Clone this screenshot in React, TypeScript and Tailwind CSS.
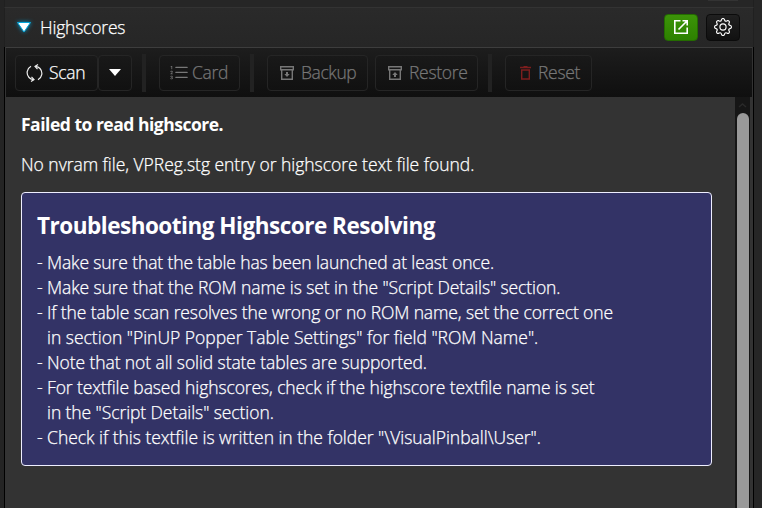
import type { ReactNode } from "react";
import { BsGear, BsListOl } from "react-icons/bs";

const shell = "flex h-[36px] items-center rounded-[4px] border border-[#252525] bg-linear-to-b from-[#191919] to-[#111111] whitespace-nowrap";

function ToolButton({ className, icon, children }: { className: string; icon: ReactNode; children: ReactNode }) {
  return (
    <button className={`${shell} ${className} text-[#777777]`}>
      {icon}
      {children}
    </button>
  );
}

function Separator({ className }: { className: string }) {
  return <div className={`h-[38px] w-[4px] shrink-0 bg-[#222222] ${className}`} />;
}

function SyncIcon() {
  return (
    <svg className="ml-[10px] mr-[6px] h-[18px] w-[17px] shrink-0" viewBox="0 0 17 18" fill="none" stroke="#eeeeee" strokeWidth="1.2">
      <path d="M5 2.200A7.300 7.300 0 0 0 3 13.500Q4.500 15.200 7.500 15.600M12 15.800A7.300 7.300 0 0 0 14 4.500Q12.500 2.800 9.500 2.400" />
      <path d="M5.500 12.800L8 15.600L5 17.500M11.500 5.200L9 2.400L12 .5" />
    </svg>
  );
}

function ArchiveIcon({ up }: { up?: boolean }) {
  return (
    <svg className="ml-[12px] mr-[7px] h-[14px] w-[14px] shrink-0" viewBox="0 0 14 14" fill="none" stroke="currentColor" strokeWidth="1.4">
      <path d="M.7 .7H13.300V3.700H.7ZM1.700 4V13.300H12.300V4" />
      <path d={up ? "M7 11V8" : "M7 6V9"} strokeWidth="2" />
      <path d={up ? "M4.300 9L7 6L9.700 9Z" : "M4.300 8L7 11L9.700 8Z"} fill="currentColor" stroke="none" />
    </svg>
  );
}

function TrashIcon() {
  return (
    <svg className="ml-[14px] mr-[7px] h-[14px] w-[11px] shrink-0" viewBox="0 0 11 14" fill="none" stroke="#7d1e1e" strokeWidth="1.4">
      <path d="M0 1.500H11M3.500 .7H7.500M1.700 4H9.300V13H1.700Z" />
    </svg>
  );
}

const tips = [
  { text: "- Make sure that the table has been launched at least once.", style: "tracking-[-0.12px]" },
  { text: '- Make sure that the ROM name is set in the "Script Details" section.', style: "tracking-[-0.09px]" },
  { text: "- If the table scan resolves the wrong or no ROM name, set the correct one", style: "tracking-[-0.117px]" },
  { text: 'in section "PinUP Popper Table Settings" for field "ROM Name".', style: "ml-[10px] tracking-[-0.01px]" },
  { text: "- Note that not all solid state tables are supported.", style: "tracking-[-0.09px]" },
  { text: "- For textfile based highscores, check if the highscore textfile name is set", style: "tracking-[-0.107px]" },
  { text: 'in the "Script Details" section.', style: "ml-[10px] tracking-[-0.08px]" },
  { text: '- Check if this textfile is written in the folder "\\VisualPinball\\User".', style: "tracking-[-0.03px]" },
];

export default function App() {
  return (
    <div className="flex h-[508px] w-[762px] overflow-hidden bg-[#262626] font-['Open_Sans','Noto_Sans',sans-serif] text-[17.5px] font-light text-white [-webkit-text-stroke:0.25px]">
      <div className="flex w-[4px] shrink-0 flex-col bg-[#242424]" />
      <div className="flex w-[750px] shrink-0 flex-col">
        <div className="h-[7px] shrink-0 border-x border-[#202020] bg-[#262626] pl-[703px]">
          <div className="h-px w-[30px] bg-[#333333]" />
        </div>
        <header className="flex h-[40px] shrink-0 items-center border-x border-t border-x-[#202020] border-t-[#333333] bg-linear-to-b from-[#2a2a2a] to-[#262626] pl-[10px] pb-px">
          <svg className="h-[20px] w-[20px] overflow-visible drop-shadow-[0_0_2px_#0096c9]" viewBox="0 0 20 20">
            <path d="M2.500 5.500H15.500L9 15Z" fill="#fff" stroke="#00a5da" strokeWidth="1" />
          </svg>
          <h1 className="ml-[5px] grow leading-[24px] tracking-[-0.2px]">Highscores</h1>
          <button className="mr-[8px] flex h-[27px] w-[34px] items-center justify-center rounded-[4px] border border-[#246c00] bg-linear-to-b from-[#3c9409] to-[#2d8100]">
            <svg className="mb-px mr-px h-[14px] w-[14px]" viewBox="0 0 14 14" fill="none" stroke="#fff" strokeWidth="1.6">
              <path d="M6.500 .8H.8V13.200H13.200V7.500M8.500 .8H13.200V5.500M13 1L4.500 9.500" />
            </svg>
          </button>
          <button className="mr-[13px] flex h-[27px] w-[34px] items-center justify-center rounded-[4px] border border-[#0b0b0b] bg-linear-to-b from-[#202020] to-[#111111]">
            <BsGear className="size-[18px]" />
          </button>
        </header>
        <div className="flex min-h-0 grow flex-col border-x border-x-black bg-[#333333]">
          <div className="flex h-[50px] shrink-0 items-center border-l border-t border-r border-x-[#333333] border-t-[#3d3d3d] bg-linear-to-b from-[#1d1d1d] to-[#0f0f0f] pl-[9px]">
            <button className={`${shell} w-[83px] tracking-[-0.3px]`}>
              <SyncIcon />
              Scan
            </button>
            <button className={`${shell} w-[34px] justify-center`}>
              <svg width="12" height="7" viewBox="0 0 12 7"><path d="M0 0H12L6 7Z" fill="#fff" /></svg>
            </button>
            <Separator className="ml-[10px]" />
            <ToolButton className="ml-[13px] w-[81px] tracking-[-0.3px]" icon={<BsListOl className="ml-[9px] mr-[3px] size-[20px] shrink-0" />}>Card</ToolButton>
            <Separator className="ml-[10px]" />
            <ToolButton className="ml-[13px] w-[101px] tracking-[-0.4px]" icon={<ArchiveIcon />}>Backup</ToolButton>
            <ToolButton className="ml-[7px] w-[103px] tracking-[-0.3px]" icon={<ArchiveIcon up />}>Restore</ToolButton>
            <Separator className="ml-[10px]" />
            <ToolButton className="ml-[13px] w-[87px] tracking-[-0.3px]" icon={<TrashIcon />}>Reset</ToolButton>
          </div>
          <main className="flex min-h-0 grow">
            <div className="w-[730px] shrink-0 pl-[16px] pt-[15px]">
              <p className="whitespace-nowrap font-bold leading-[24px] tracking-[-0.49px] [-webkit-text-stroke:0px]">Failed to read highscore.</p>
              <p className="mt-[16px] whitespace-nowrap leading-[24px] tracking-[-0.03px]">No nvram file, VPReg.stg entry or highscore text file found.</p>
              <section className="mt-[16px] h-[274px] w-[691px] rounded-[4px] border border-[#eeeeff] bg-[#333366] pl-[15px] pt-[18px]">
                <h2 className="whitespace-nowrap text-[22.5px] font-bold leading-[30px] tracking-[-0.49px] [-webkit-text-stroke:0px]">Troubleshooting Highscore Resolving</h2>
                <div className="mt-[9px]">
                  {tips.map((tip) => (
                    <p key={tip.text} className={`whitespace-nowrap leading-[25px] ${tip.style}`}>{tip.text}</p>
                  ))}
                </div>
              </section>
            </div>
            <div className="flex w-[15px] flex-col items-center border-x border-[#161616] bg-[#161616] pt-px">
              <svg className="mt-[5px] mb-[5px]" width="9" height="5" viewBox="0 0 9 5" fill="none" stroke="#292929" strokeWidth="1.5"><path d="M1 4L4.500 1L8 4" /></svg>
              <div className="w-[12px] grow rounded-t-[6px] bg-[#999999]" />
            </div>
          </main>
        </div>
      </div>
    </div>
  );
}
